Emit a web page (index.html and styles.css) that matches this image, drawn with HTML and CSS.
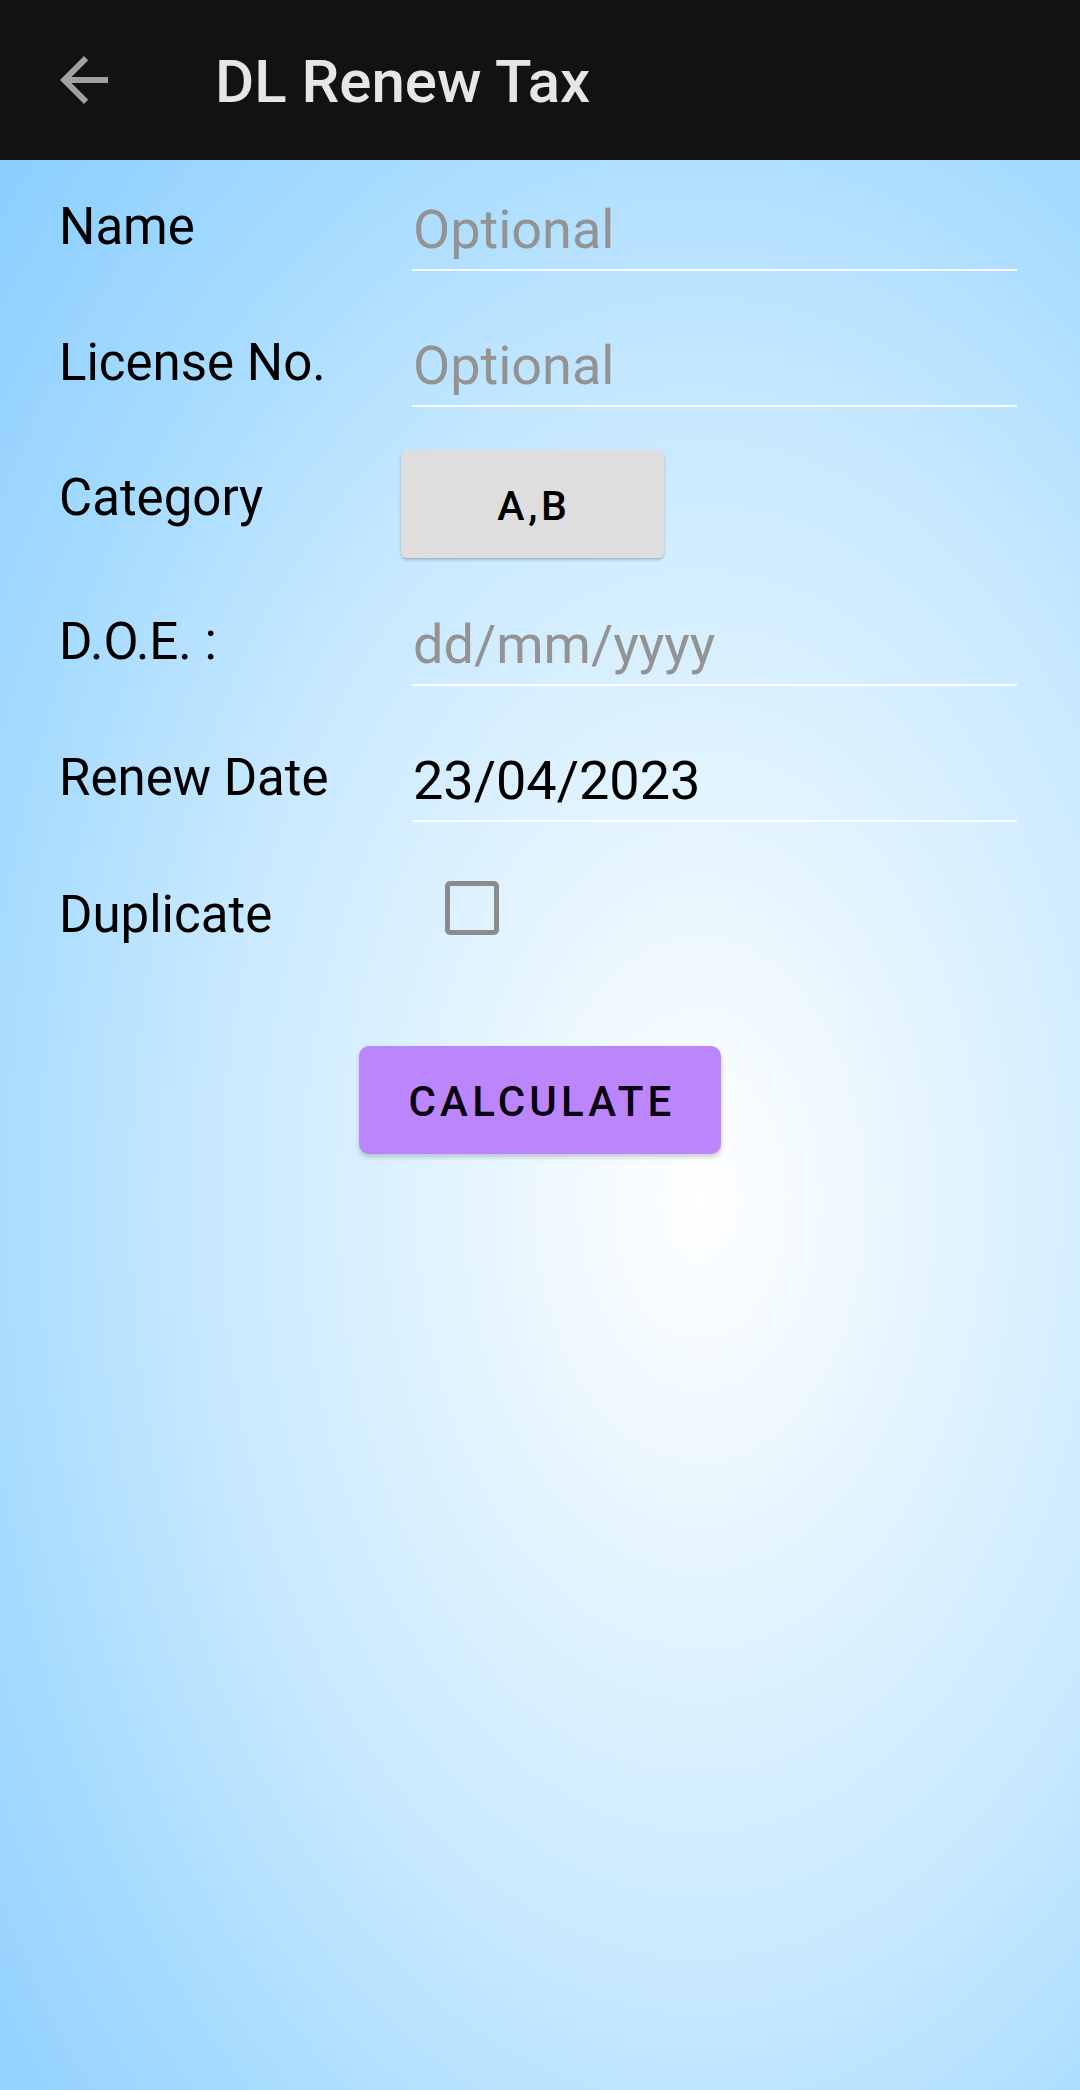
FILE: index.html
```html
<!DOCTYPE html>
<html>
<head lang="en">
    <meta charset="UTF-8">
    <title>DL Renew Tax</title>
    <link rel="stylesheet" href="styles.css">
</head>
<body>
    <div class="toolbar">
        <svg class="back" viewBox="0 0 24 24" width="72" height="72">
            <path d="M20 11H7.83l5.59-5.59L12 4l-8 8 8 8 1.41-1.41L7.83 13H20v-2z" fill="#a0a0a0"/>
        </svg>
        <div class="title">DL Renew Tax</div>
    </div>
    <div class="content">
        <div class="row">
            <div class="label">Name</div>
            <div class="field hint">Optional</div>
        </div>
        <div class="row">
            <div class="label">License No.</div>
            <div class="field hint">Optional</div>
        </div>
        <div class="row row-category">
            <div class="label">Category</div>
            <div class="chip">A,B</div>
        </div>
        <div class="row">
            <div class="label">D.O.E. :</div>
            <div class="field hint">dd/mm/yyyy</div>
        </div>
        <div class="row">
            <div class="label">Renew Date</div>
            <div class="field">23/04/2023</div>
        </div>
        <div class="row row-check">
            <div class="label">Duplicate</div>
            <span class="check"></span>
        </div>
        <div class="actions">
            <div class="calc">CALCULATE</div>
        </div>
    </div>
</body>
</html>
```

FILE: styles.css
```css
* {
    margin: 0;
    padding: 0;
    box-sizing: border-box;
}
body {
    font-family: Roboto, "Noto Sans", sans-serif;
    background: #121212;
}
.toolbar {
    height: 160px;
    background: #121212;
    display: flex;
    align-items: center;
}
.toolbar .back {
    margin-left: 48px;
    flex: none;
}
.toolbar .title {
    margin-left: 95px;
    font-size: 60px;
    font-weight: 500;
    color: #e6e6e6;
    margin-top: 2px;
}
.content {
    min-height: calc(100vh - 160px);
    padding: 37px 0 0 59px;
    background: radial-gradient(ellipse 820px 1300px at 700px 1040px,
        #ffffff 0%, #e8f6ff 25%, #c6e8ff 62%, #a6dbff 88%, #8ccfff 115%);
}
.row {
    display: flex;
    align-items: flex-start;
    margin-bottom: 62px;
}
.label {
    width: 351px;
    flex: none;
    font-size: 51px;
    line-height: 60px;
    color: #000;
}
.field {
    width: 605px;
    margin-left: 2px;
    padding: 1px 0 7px 1px;
    font-size: 54px;
    line-height: 64px;
    color: #000;
    border-bottom: 2px solid rgba(255, 255, 255, 0.92);
}
.hint {
    color: #939393;
}
.row-category {
    margin-top: -19px;
    margin-bottom: 54px;
}
.row-category .label {
    margin-top: 18px;
}
.chip {
    margin-left: -9px;
    width: 263px;
    height: 108px;
    background: #dedede;
    border-radius: 6px;
    box-shadow: 0 2px 3px rgba(0, 0, 0, 0.22);
    display: flex;
    align-items: center;
    justify-content: center;
    font-size: 41px;
    font-weight: 500;
    letter-spacing: 0.09em;
    color: #000;
    padding-top: 3px;
    padding-left: 3px;
}
.row-check {
    margin-top: -3px;
}
.row-check .label {
    margin-top: 4px;
}
.check {
    margin-left: 35px;
    width: 54px;
    height: 54px;
    border: 5.5px solid #8c8c8c;
    border-radius: 5px;
}
.actions {
    display: flex;
    justify-content: center;
    margin-left: -59px;
    margin-top: 101px;
}
.calc {
    width: 362px;
    height: 108px;
    background: #bb86fc;
    border-radius: 10px;
    box-shadow: 0 3px 5px rgba(0, 0, 0, 0.2);
    display: flex;
    align-items: center;
    justify-content: center;
    font-size: 42px;
    font-weight: 500;
    letter-spacing: 0.1em;
    color: #0a0010;
    padding-left: 4px;
    padding-top: 2px;
}
```
